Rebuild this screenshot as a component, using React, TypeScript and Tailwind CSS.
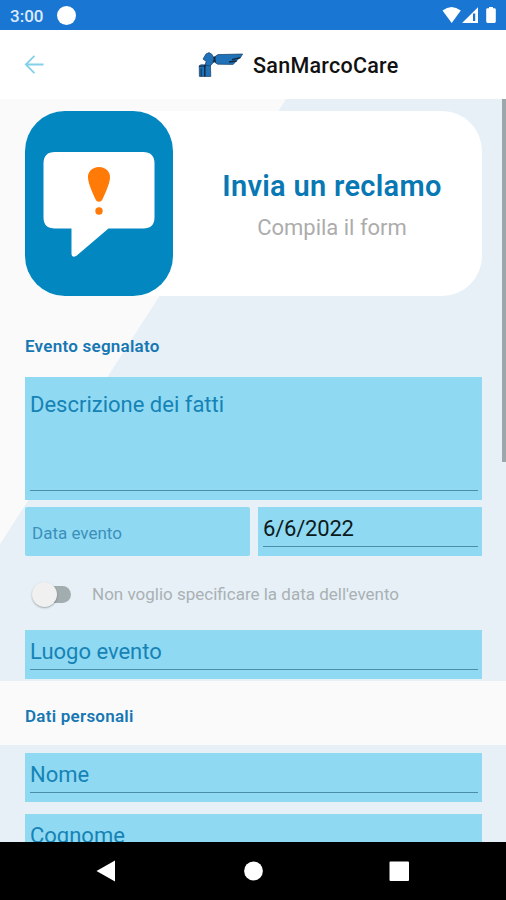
import type { ReactNode } from 'react';

const StatusBar = () => (
  <div className="flex h-[30px] shrink-0 items-center bg-[#1976d2] pl-[10px] pr-2 text-white">
    <span className="w-[35px] pt-[2px] text-[17px] font-medium leading-none text-blue-100">3:00</span>
    <span className="ml-3 h-[19px] w-[19px] rounded-full bg-white" />
    <svg className="ml-auto" width="56" height="18" viewBox="0 0 56 18" fill="white">
      <path d="M0.5 4.6 Q9.5 -2.6 18.8 4.6 L9.7 17 Z" />
      <path fillRule="evenodd" d="M20 17 L36 1.2 V17 Z M31 7.6 V15 H33.2 V7.6 Z" />
      <path d="M47 1 h4 v1.2 h1.4 q1.4 0 1.4 1.4 v12 q0 1.4 -1.4 1.4 h-6.8 q-1.4 0 -1.4 -1.4 v-12 q0 -1.4 1.4 -1.4 h1.4 z" />
    </svg>
  </div>
);

const Logo = () => (
  <svg className="shrink-0" width="46" height="28" viewBox="0 0 46 28">
    <g fill="#1f72b8" stroke="#173d63" strokeWidth="0.7" strokeLinejoin="round">
      <path d="M1.2 14.8 L3 13.8 L12.4 14 L12.8 25.4 H1.4 Z" />
      <path d="M5.6 7 L8 3 L11 1.6 L14 3.4 L15.8 7 L14.6 12.6 L12 15 L7 14 L8.2 10.4 L5 8 Z" />
      <path d="M17 5.6 L20 3.6 L44.6 3 L42.6 6.4 L40.2 8 L37.6 11 L35 13.4 L19.6 13.2 L17 11.4 Z" />
    </g>
    <path
      d="M6.8 14 V25.4 M15.8 5.6 L17.4 11.4 M17 5.6 L15.4 11.6 M34 8.6 L42.4 6.6 M31 11 L38.6 10"
      fill="none"
      stroke="#14263c"
      strokeWidth="1.4"
    />
    <path d="M3.2 17.4 V25.4 M1 15.2 H8" fill="none" stroke="#14263c" strokeWidth="0.9" />
  </svg>
);

const AppBar = () => (
  <header className="flex h-[69px] shrink-0 items-center bg-white">
    <svg className="ml-6" width="20" height="20" viewBox="0 0 20 20" fill="none" stroke="#84d0e9" strokeWidth="1.8">
      <path d="M19.5 9.5 H2 M10.4 0.8 L1.8 9.5 L10.4 18.2" />
    </svg>
    <div className="ml-[154px] flex items-center">
      <Logo />
      <h1 className="ml-[9px] whitespace-nowrap pt-[3px] text-[21.5px] font-medium leading-none tracking-[0.27px] text-[#111]">SanMarcoCare</h1>
    </div>
  </header>
);

const ComplaintCard = () => (
  <section className="ml-[25px] mr-6 flex h-[185px] shrink-0 rounded-[40px] bg-white">
    <div className="h-full w-[148px] shrink-0 rounded-[40px] bg-[#0287c0]">
      <svg width="148" height="185" viewBox="0 0 148 185">
        <path
          fill="white"
          d="M30 41 H118 Q129.5 41 129.5 52.5 V106.5 Q129.5 117.5 118 117.5 H83.5 L51.5 144.8 Q46.5 147.5 46.5 142.5 V117.5 H30 Q18.5 117.5 18.5 106.5 V52.5 Q18.5 41 30 41 Z"
        />
        <path fill="#ff7a06" d="M74 56 C81 56 85.5 61 85 67 C84.6 73.5 79.6 83.5 77.4 88.6 C76 91.6 72 91.6 70.6 88.6 C68.4 83.5 63.4 73.5 63 67 C62.5 61 67 56 74 56 Z" />
        <circle cx="74" cy="100" r="3.7" fill="#ff7a06" />
      </svg>
    </div>
    <div className="flex grow flex-col items-center whitespace-nowrap pl-[9px] pt-[59px]">
      <h2 className="text-[29px] font-semibold leading-[32px] tracking-[0.3px] text-[#0878b4]">Invia un reclamo</h2>
      <p className="mt-[13px] text-[22px] leading-[26px] text-[#acacac]">Compila il form</p>
    </div>
  </section>
);

const Field = ({ children, className = 'h-[49px] pt-[9px]' }: { children: ReactNode; className?: string }) => (
  <div className={`flex shrink-0 flex-col bg-[#90d9f2] pb-[9px] pl-[5px] pr-1 ${className}`}>
    {children}
    <div className="mt-auto h-[1.5px] shrink-0 bg-[#4b8cab]" />
  </div>
);

const fieldLabel = 'whitespace-nowrap text-[22px] leading-[26px] text-[#1583b6]';
const sectionTitle = 'text-[17px] font-semibold leading-5 tracking-[0.25px] text-[#1677b3]';

const NavBar = () => (
  <nav className="flex h-[58px] shrink-0 items-center bg-black">
    <svg width="506" height="58" viewBox="0 0 506 58" fill="white">
      <path d="M96.5 29 L115 18.5 V39.5 Z" />
      <circle cx="253.5" cy="29" r="9.4" />
      <rect x="389.5" y="19.5" width="19.5" height="19.5" rx="1" />
    </svg>
  </nav>
);

export default function App() {
  return (
    <div className="flex h-[900px] w-[506px] flex-col overflow-hidden font-[Roboto,sans-serif]">
      <StatusBar />
      <AppBar />

      <main className="relative flex h-[743px] shrink-0 flex-col overflow-hidden bg-[linear-gradient(122.73deg,#fafafa_240.4px,#e6f0f6_241px)] pt-3">
        <ComplaintCard />

        <h3 className={`ml-[25px] mt-10 ${sectionTitle}`}>Evento segnalato</h3>

        <div className="ml-[25px] mr-6 mt-[21px] flex flex-col gap-[7px]">
          <Field className="h-[123px] pt-[15px]">
            <span className={fieldLabel}>Descrizione dei fatti</span>
          </Field>
          <div className="flex gap-2">
            <div className="flex h-[49px] w-[225px] items-center rounded-[2px] bg-[#90d9f2] pl-[7px] pt-[4px] text-[17px] text-[#3a90bb]">Data evento</div>
            <Field className="h-[49px] grow pt-[9px]">
              <span className="text-[22px] leading-[26px] tracking-[-0.2px] text-[#0c1a20]">6/6/2022</span>
            </Field>
          </div>
        </div>

        {/* Date opt-out */}
        <div className="ml-[31px] flex h-[74px] shrink-0 items-center pt-[2px]">
          <div className="flex h-[26px] w-[40px] items-center">
            <div className="ml-[3px] flex h-[17px] w-[37px] items-center rounded-full bg-[#a2adb0]">
              <div className="-ml-[2px] h-[25px] w-[25px] shrink-0 rounded-full bg-[#f0f0f0] shadow-[0_1px_2px_rgba(0,0,0,0.3)]" />
            </div>
          </div>
          <span className="ml-[21px] whitespace-nowrap pt-px text-[17px] text-[#aab0b4]">Non voglio specificare la data dell'evento</span>
        </div>

        <div className="ml-[25px] mr-6">
          <Field>
            <span className={fieldLabel}>Luogo evento</span>
          </Field>
        </div>

        <div className="mt-[2px] flex h-[64px] shrink-0 items-center bg-[#fafafa] pl-[25px] pt-[6px]">
          <h3 className={sectionTitle}>Dati personali</h3>
        </div>

        <div className="ml-[25px] mr-6 mt-2 flex shrink-0 flex-col gap-3">
          <Field>
            <span className={fieldLabel}>Nome</span>
          </Field>
          <Field>
            <span className={fieldLabel}>Cognome</span>
          </Field>
        </div>

        {/* Scroll indicator */}
        <div className="absolute right-0 top-0 h-[363px] w-[4.5px] bg-[#9ba7aa]" />
      </main>

      <NavBar />
    </div>
  );
}
